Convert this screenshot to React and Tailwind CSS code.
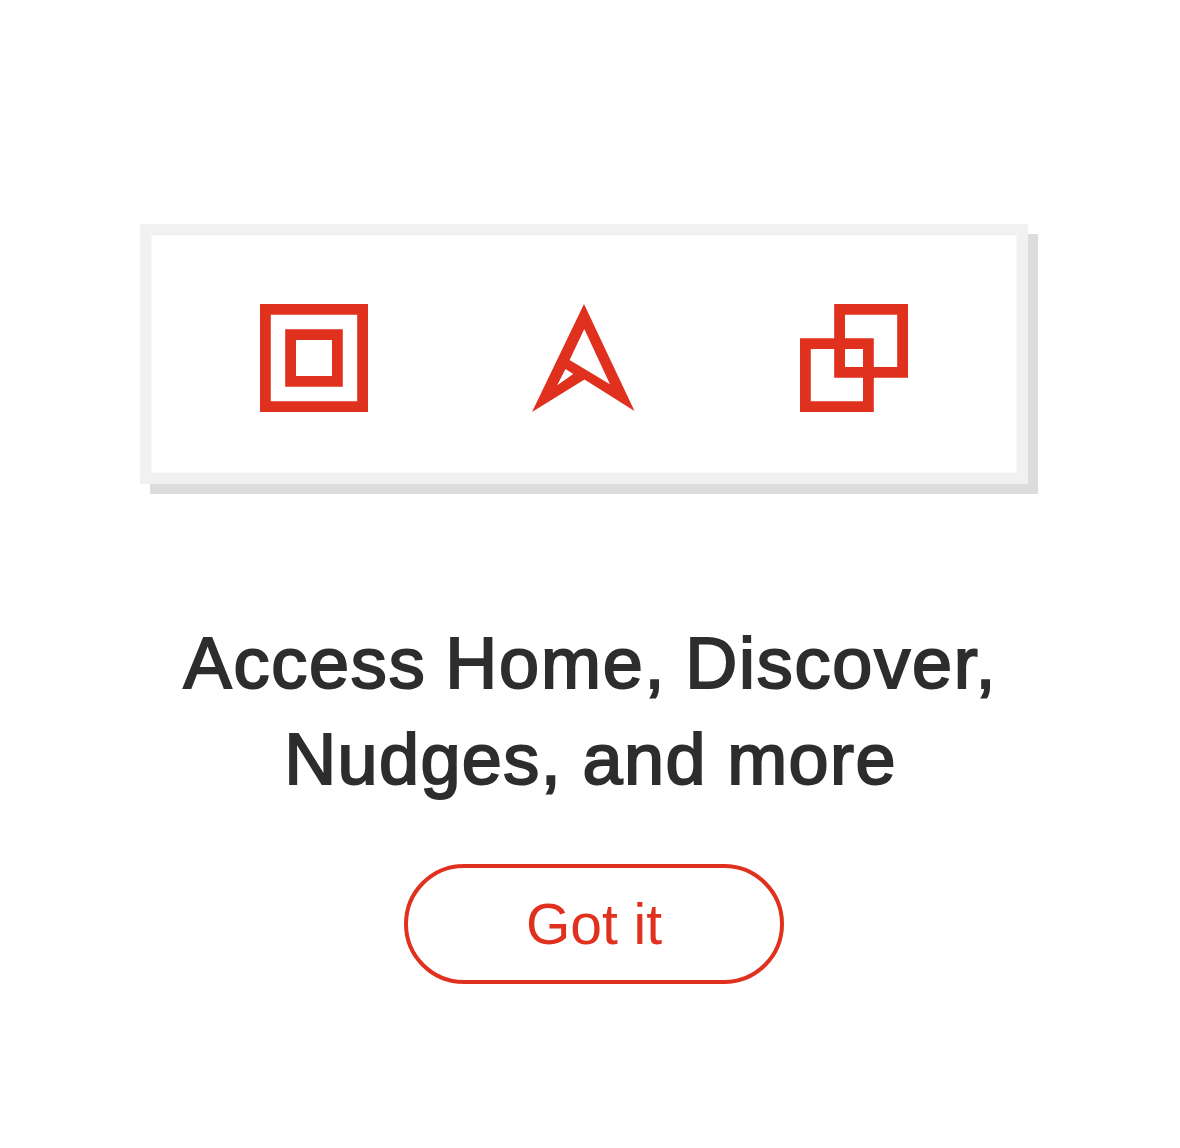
export default function App() {
  return (
    <main className="flex h-[1148px] w-[1180px] flex-col bg-white pt-[224px] font-['Liberation_Sans',Arial,sans-serif]">
      <section className="ml-[140px] flex h-[260px] w-[888px] items-start bg-white pl-[120px] pt-[80px] shadow-[inset_0_0_0_11.4px_#f1f1f1,10px_10px_0_#dddddd]">
        <svg width="108" height="108" fill="none" stroke="#e0301e" strokeWidth="10.8"><path d="M5.400 5.400h97.200v97.200h-97.200zM30.600 30.600h46.800v46.800h-46.800z" /></svg>
        <svg className="ml-[164px]" width="104" height="108" fill="#e0301e"><path fillRule="evenodd" d="M52 0L102.500 107L52.500 75.500L0 108ZM52.300 25L37.600 56L78 80.300ZM33.500 65L25.200 81.300L41.300 70Z" /></svg>
        <svg className="ml-[164px]" width="108" height="108" fill="none" stroke="#e0301e" strokeWidth="10.8"><path d="M39.600 5.400h63v63h-63zM5.400 39.600h63v63h-63z" /></svg>
      </section>
      <h1 className="mt-[131px] ml-[183px] flex w-[811px] flex-col items-center text-[72px] leading-[96px] text-[#2d2d2d] [-webkit-text-stroke:2px_#2d2d2d] [paint-order:stroke_fill]">
        <span className="ml-[4px] whitespace-nowrap tracking-[1.8px] [word-spacing:-3px]">Access Home, Discover,</span>
        <span className="ml-[4px] whitespace-nowrap tracking-[1.4px] [word-spacing:-1px]">Nudges, and more</span>
      </h1>
      <button className="mt-[57px] ml-[404px] h-[120px] w-[380px] rounded-full border-4 border-[#e0301e] text-[57px] leading-none text-[#e0301e]">Got it</button>
    </main>
  );
}
